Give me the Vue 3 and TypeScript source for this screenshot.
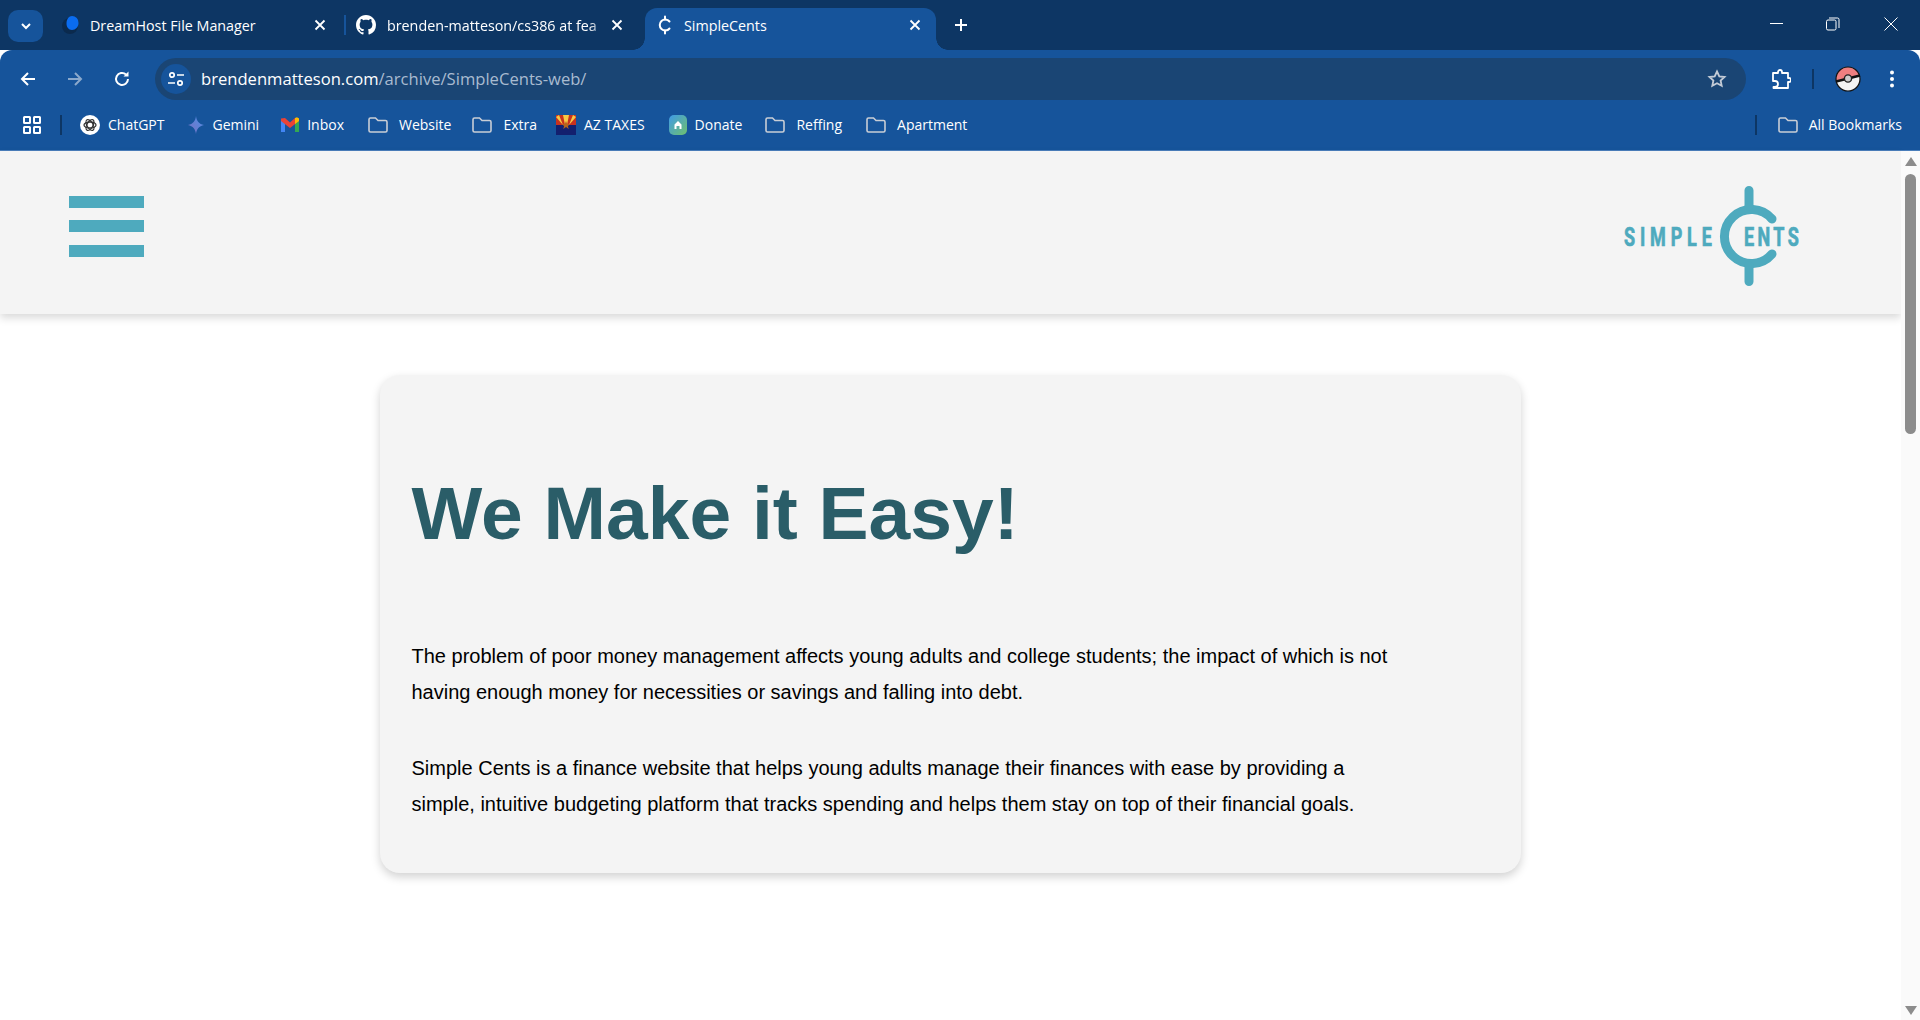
<script setup lang="ts">
interface Mark {
  label: string
  icon: string
  after: number
}

const marks: Mark[] = [
  { label: 'ChatGPT', icon: 'gpt', after: 22 },
  { label: 'Gemini', icon: 'gemini', after: 22 },
  { label: 'Inbox', icon: 'gmail', after: 24 },
  { label: 'Website', icon: 'folder', after: 21 },
  { label: 'Extra', icon: 'folder', after: 19 },
  { label: 'AZ TAXES', icon: 'flag', after: 24 },
  { label: 'Donate', icon: 'donate', after: 23 },
  { label: 'Reffing', icon: 'folder', after: 24 },
  { label: 'Apartment', icon: 'folder', after: 0 },
]
</script>

<template>
  <div class="window">
    <div class="tabstrip">
      <button class="tab-search">
        <svg width="14" height="14" viewBox="0 0 14 14"><path d="M3 5l4 4 4-4" fill="none" stroke="#fff" stroke-width="2" /></svg>
      </button>
      <div class="tab tab-one">
        <svg class="fav" width="18" height="20" viewBox="0 0 18 20">
          <circle cx="8" cy="11" r="8" fill="#0b2a4d" />
          <path d="M10 1a6.500 6.500 0 0 1 6.500 7c0 4-3 7-6.500 7-3.500 0-5.500-3-5.500-6.500C4.500 4 7 1 10 1z" fill="#0a6cf0" />
        </svg>
        <span class="tab-title">DreamHost File Manager</span>
        <svg class="close" width="12" height="12" viewBox="0 0 12 12"><path d="M1.500 1.500l9 9M10.500 1.500l-9 9" stroke="#fff" stroke-width="1.800" /></svg>
      </div>
      <i class="tab-sep"></i>
      <div class="tab tab-two">
        <svg class="fav" width="20" height="20" viewBox="0 0 16 16">
          <path fill="#fff" d="M8 0C3.580 0 0 3.580 0 8c0 3.540 2.290 6.530 5.470 7.590.4.070.55-.17.55-.38 0-.19-.01-.82-.01-1.490-2.010.37-2.530-.49-2.690-.94-.09-.23-.48-.94-.82-1.130-.28-.15-.68-.52-.01-.53.630-.01 1.080.58 1.230.82.720 1.210 1.870.87 2.330.66.070-.52.280-.87.510-1.070-1.780-.2-3.640-.89-3.640-3.950 0-.87.310-1.590.820-2.150-.08-.2-.36-1.020.08-2.120 0 0 .67-.21 2.200.82.640-.18 1.320-.27 2-.27s1.360.09 2 .27c1.530-1.040 2.200-.82 2.200-.82.440 1.100.16 1.920.08 2.120.51.560.82 1.270.82 2.150 0 3.070-1.870 3.750-3.650 3.950.29.250.54.730.54 1.480 0 1.070-.01 1.930-.01 2.200 0 .21.150.46.550.38A8.010 8.010 0 0 0 16 8c0-4.420-3.580-8-8-8z" />
        </svg>
        <span class="tab-title fade">brenden-matteson/cs386 at fea</span>
        <svg class="close" width="12" height="12" viewBox="0 0 12 12"><path d="M1.500 1.500l9 9M10.500 1.500l-9 9" stroke="#fff" stroke-width="1.800" /></svg>
      </div>
      <div class="tab tab-active">
        <svg class="fav" width="18" height="20" viewBox="0 0 18 20" fill="none" stroke="#fff" stroke-width="2" stroke-linecap="round">
          <path d="M13.500 6.500A5.500 5.500 0 1 0 13.500 13.500" />
          <path d="M9 1.500v3M9 15.500v3" />
        </svg>
        <span class="tab-title">SimpleCents</span>
        <svg class="close" width="12" height="12" viewBox="0 0 12 12"><path d="M1.500 1.500l9 9M10.500 1.500l-9 9" stroke="#fff" stroke-width="1.800" /></svg>
      </div>
      <svg class="new-tab" width="14" height="14" viewBox="0 0 14 14"><path d="M7 1v12M1 7h12" stroke="#fff" stroke-width="2" /></svg>
      <div class="win-btns">
        <svg width="14" height="14" viewBox="0 0 14 14"><path d="M0 6.500h13" stroke="#fff" stroke-width="1" /></svg>
        <svg width="14" height="14" viewBox="0 0 14 14" fill="none" stroke="#fff"><rect x=".5" y="3" width="9.500" height="10" rx="1.500" /><path d="M3 1h8.500A1.500 1.500 0 0 1 13 2.500V11" /></svg>
        <svg width="14" height="14" viewBox="0 0 14 14"><path d="M.5.500l13 13M13.500.500l-13 13" stroke="#fff" stroke-width="1" /></svg>
      </div>
    </div>

    <div class="toolbar">
      <svg class="nav" width="18" height="18" viewBox="0 0 18 18" fill="none" stroke="#fff" stroke-width="2"><path d="M16 9H3M9 3L3 9l6 6" /></svg>
      <svg class="nav dim" width="18" height="18" viewBox="0 0 18 18" fill="none" stroke="#8ba9cc" stroke-width="2"><path d="M2 9h13M9 3l6 6-6 6" /></svg>
      <svg class="nav" width="18" height="18" viewBox="0 0 18 18" fill="none" stroke="#fff" stroke-width="2"><path d="M15 9a6 6 0 1 1-2-4.500" /><path d="M15.500 1.500v5h-5" fill="#fff" stroke="none" /></svg>
      <div class="omnibox">
        <span class="site-info">
          <svg width="18" height="18" viewBox="0 0 18 18" fill="none" stroke="#fff" stroke-width="1.700"><circle cx="5" cy="5" r="2.200" /><path d="M10 5h7M1 13h7" /><circle cx="13" cy="13" r="2.200" /></svg>
        </span>
        <span class="url">brendenmatteson.com<span class="url-dim">/archive/SimpleCents-web/</span></span>
        <svg class="star" width="20" height="20" viewBox="0 0 20 20" fill="none" stroke="#c3cbd6" stroke-width="1.800"><path d="M10 2.500l2.300 5 5.200.5-3.900 3.500 1.100 5.300L10 14.200l-4.700 2.600 1.100-5.300L2.500 8l5.200-.5z" /></svg>
      </div>
      <svg class="puzzle" width="20" height="20" viewBox="0 0 20 20" fill="none" stroke="#fff" stroke-width="1.800" stroke-linejoin="round"><path d="M2 4h5V3a2 2 0 0 1 4 0v1h6v5h1a2 2 0 0 1 0 4h-1v6H2.500v-1h1.500a3 3 0 0 0 0-6H2z" /></svg>
      <i class="bar-sep"></i>
      <svg class="ball" width="26" height="26" viewBox="0 0 26 26">
        <circle cx="13" cy="13" r="12" fill="#f3f3f3" />
        <path d="M1.200 15A12 12 0 0 1 24.500 9.500z" fill="#ef7f80" />
        <path d="M1 15.500L25 9.500" stroke="#111" stroke-width="2.600" />
        <circle cx="13" cy="13" r="12" fill="none" stroke="#111" stroke-width="1.200" />
        <circle cx="13" cy="12.500" r="3.600" fill="#ccc" stroke="#222" stroke-width="1.400" />
      </svg>
      <svg class="dots" width="6" height="20" viewBox="0 0 6 20" fill="#fff"><circle cx="3" cy="3.500" r="2" /><circle cx="3" cy="10" r="2" /><circle cx="3" cy="16.500" r="2" /></svg>
    </div>

    <div class="bookmarks">
      <svg class="apps" width="18" height="18" viewBox="0 0 18 18" fill="none" stroke="#fff" stroke-width="2"><rect x="1" y="1" width="6" height="6" rx=".5" /><rect x="11" y="1" width="6" height="6" rx=".5" /><rect x="1" y="11" width="6" height="6" rx=".5" /><rect x="11" y="11" width="6" height="6" rx=".5" /></svg>
      <i class="mark-sep"></i>
      <div
        v-for="m in marks"
        :key="m.label"
        class="mark"
        :class="'mark-' + m.icon"
        :style="{ marginRight: m.after + 'px' }"
      >
        <svg v-if="m.icon === 'gpt'" width="20" height="20" viewBox="0 0 20 20">
          <circle cx="10" cy="10" r="10" fill="#fff" />
          <g fill="none" stroke="#333" stroke-width="1.300">
            <ellipse cx="10" cy="10" rx="6" ry="3" />
            <ellipse cx="10" cy="10" rx="6" ry="3" transform="rotate(60 10 10)" />
            <ellipse cx="10" cy="10" rx="6" ry="3" transform="rotate(120 10 10)" />
          </g>
        </svg>
        <svg v-else-if="m.icon === 'gemini'" width="18" height="20" viewBox="0 0 18 20">
          <defs>
            <linearGradient id="gem" x1="0" y1="1" x2="1" y2="0"><stop offset="0" stop-color="#7a6fc0" /><stop offset="1" stop-color="#4c90e8" /></linearGradient>
          </defs>
          <path d="M9 1c.6 5 3 8 8 9-5 1-7.400 4-8 9-.6-5-3-8-8-9 5-1 7.400-4 8-9z" fill="url(#gem)" />
        </svg>
        <svg v-else-if="m.icon === 'gmail'" width="18" height="16" viewBox="0 0 18 16">
          <path d="M0 3v12h4V6z" fill="#4285f4" />
          <path d="M14 6v9h4V3z" fill="#34a853" />
          <path d="M0 1.500L4 1l5 4.500L14 1l4 .5V4l-9 7-9-7z" fill="#ea4335" />
          <path d="M14 1l2-.8 2 1.300V4l-4 3z" fill="#fbbc04" />
        </svg>
        <svg v-else-if="m.icon === 'folder'" width="20" height="16" viewBox="0 0 20 16" fill="none" stroke="#c9ced6" stroke-width="1.600">
          <path d="M1 2.500A1.500 1.500 0 0 1 2.500 1h5L10 3.500h7.500A1.500 1.500 0 0 1 19 5v8.500a1.500 1.500 0 0 1-1.500 1.500h-15A1.500 1.500 0 0 1 1 13.500z" />
        </svg>
        <svg v-else-if="m.icon === 'flag'" width="20" height="20" viewBox="0 0 20 20">
          <rect width="20" height="20" fill="#13206e" />
          <path d="M0 0h20v10H0z" fill="#c8321e" />
          <path d="M0 2L7 10 3 0zM20 2L13 10 17 0zM7 0l2 10h2l2-10z" fill="#f6c945" />
          <path d="M10 6l1.200 3 3 .3-2.300 1.700.8 3L10 12l-2.700 2 .8-3-2.300-1.700 3-.3z" fill="#b5651d" />
        </svg>
        <svg v-else width="18" height="20" viewBox="0 0 18 20">
          <defs>
            <linearGradient id="don" x1="0" y1="0" x2="1" y2="1"><stop offset="0" stop-color="#3f9be8" /><stop offset="1" stop-color="#6fc06d" /></linearGradient>
          </defs>
          <rect width="18" height="20" rx="5" fill="url(#don)" />
          <path d="M9 6l3.500 3.500V14h-2v-3h-3v3h-2V9.500z" fill="#fff" />
        </svg>
        <span>{{ m.label }}</span>
      </div>
      <i class="mark-sep all-sep"></i>
      <div class="mark mark-folder all-marks">
        <svg width="20" height="16" viewBox="0 0 20 16" fill="none" stroke="#c9ced6" stroke-width="1.600">
          <path d="M1 2.500A1.500 1.500 0 0 1 2.500 1h5L10 3.500h7.500A1.500 1.500 0 0 1 19 5v8.500a1.500 1.500 0 0 1-1.500 1.500h-15A1.500 1.500 0 0 1 1 13.500z" />
        </svg>
        <span>All Bookmarks</span>
      </div>
    </div>

    <div class="viewport">
      <div class="page">
        <header class="site-header">
          <div class="burger"><i></i><i></i><i></i></div>
          <svg class="logo" width="180" height="104" viewBox="0 0 180 104">
            <g fill="none" stroke="#4eaabe" stroke-width="9" stroke-linecap="round">
              <path d="M150 35A27 27 0 1 0 150 70" />
              <path d="M127 6.500V22M127 82V97.500" />
            </g>
            <text class="logo-text" transform="translate(2 62) scale(.72 1)" textLength="122" lengthAdjust="spacing">SIMPLE</text>
            <text class="logo-text" transform="translate(122 62) scale(.72 1)" textLength="76" lengthAdjust="spacing">ENTS</text>
          </svg>
        </header>
        <section class="card">
          <h1>We Make it Easy!</h1>
          <p>The problem of poor money management affects young adults and college students; the impact of which is not having enough money for necessities or savings and falling into debt.</p>
          <p>Simple Cents is a finance website that helps young adults manage their finances with ease by providing a simple, intuitive budgeting platform that tracks spending and helps them stay on top of their financial goals.</p>
        </section>
      </div>
      <div class="scrollbar">
        <i class="arrow-up"></i>
        <i class="thumb"></i>
        <i class="arrow-down"></i>
      </div>
    </div>
  </div>
</template>

<style>
html,
body {
  margin: 0;
  overflow: hidden;
}
</style>

<style scoped>
.window {
  width: 1920px;
  height: 1020px;
  display: flex;
  flex-direction: column;
  overflow: hidden;
  background: #fff;
  font-family: 'Open Sans', 'Liberation Sans', sans-serif;
  color: #fff;
}

.tabstrip {
  height: 50px;
  display: flex;
  align-items: flex-end;
  background: #0d3664;
  flex: none;
}

.tab-search {
  width: 35px;
  height: 32px;
  margin: 0 0 8px 8px;
  border: 0;
  padding: 0;
  border-radius: 10px;
  background: #16549b;
  display: flex;
  align-items: center;
  justify-content: center;
  flex: none;
}

.tab {
  height: 42px;
  padding-bottom: 8px;
  display: flex;
  align-items: center;
  font-size: 14.3px;
  flex: none;
  box-sizing: border-box;
}

.tab-one {
  width: 301px;
  padding-left: 19px;
  padding-right: 18px;
}

.tab-two {
  width: 299px;
  padding-left: 10px;
  padding-right: 22px;
}

.tab-active {
  position: relative;
  width: 291px;
  padding-left: 11px;
  padding-right: 15px;
  background: #16549b;
  border-radius: 12px 12px 0 0;
}

/* the concave feet either side of the active tab */
.tab-active::before,
.tab-active::after {
  content: '';
  position: absolute;
  bottom: 0;
  width: 12px;
  height: 12px;
}

.tab-active::before {
  left: -12px;
  background: radial-gradient(circle at 0 0, transparent 11.5px, #16549b 12px);
}

.tab-active::after {
  right: -12px;
  background: radial-gradient(circle at 100% 0, transparent 11.5px, #16549b 12px);
}

.tab-sep {
  width: 2px;
  height: 20px;
  margin-bottom: 15px;
  background: #16549b;
}

.fav {
  flex: none;
  margin-right: 10px;
}

.tab-two .fav {
  margin-right: 11px;
}

.tab-title {
  flex: 1;
  white-space: nowrap;
}

.fade {
  -webkit-mask-image: linear-gradient(90deg, #000 90%, transparent);
  mask-image: linear-gradient(90deg, #000 90%, transparent);
}

.close {
  flex: none;
}

.new-tab {
  margin: 0 0 18px 18px;
}

.win-btns {
  margin-left: auto;
  display: flex;
  gap: 42px;
  padding-right: 22px;
  height: 48px;
  align-items: center;
  align-self: flex-start;
}

.win-btns svg:last-child {
  margin-left: 2px;
}

.toolbar {
  height: 50px;
  flex: none;
  display: flex;
  align-items: flex-start;
  box-sizing: border-box;
  padding-top: 8px;
  background: #16549b;
  border-radius: 12px 12px 0 0;
}

.nav {
  margin-top: 12px;
  margin-left: 19px;
  margin-right: 10px;
  flex: none;
}

.omnibox {
  width: 1591px;
  height: 42px;
  margin-left: 14px;
  display: flex;
  align-items: center;
  border-radius: 21px;
  background: #1a4574;
  flex: none;
}

.site-info {
  width: 30px;
  height: 30px;
  margin-left: 6px;
  border-radius: 50%;
  background: #16549b;
  display: flex;
  align-items: center;
  justify-content: center;
}

.url {
  margin-left: 10px;
  font-size: 16.6px;
  line-height: 42px;
}

.url-dim {
  color: #a9bbd0;
}

.star {
  margin-left: auto;
  margin-right: 19px;
}

.puzzle {
  margin: 11px 0 0 25px;
  flex: none;
}

.bar-sep {
  width: 2px;
  height: 20px;
  margin: 11px 0 0 21px;
  background: #0d3664;
  flex: none;
}

.ball {
  margin: 8px 0 0 21px;
  flex: none;
}

.dots {
  margin: 11px 0 0 28px;
  flex: none;
}

.bookmarks {
  height: 51px;
  flex: none;
  box-sizing: border-box;
  display: flex;
  align-items: center;
  padding-left: 23px;
  background: #16549b;
  border-bottom: 1px solid #4a7ebb;
  font-size: 14px;
}

.apps {
  flex: none;
}

.mark-sep {
  width: 2px;
  height: 20px;
  margin-left: 19px;
  margin-right: 18px;
  background: #0d3664;
}

.all-sep {
  margin-left: auto;
  margin-right: 21px;
}

.mark {
  display: flex;
  align-items: center;
  gap: 8px;
  white-space: nowrap;
}

.mark span {
  margin-top: -2px;
}

.mark-folder {
  gap: 11px;
}

.all-marks {
  margin-right: 18px;
}

.viewport {
  flex: 1;
  min-height: 0;
  display: flex;
}

.page {
  flex: 1;
  min-width: 0;
  font-family: 'Liberation Sans', Arial, sans-serif;
  color: #000;
}

.site-header {
  height: 163px;
  display: flex;
  align-items: flex-start;
  justify-content: space-between;
  padding: 0 99px 0 69px;
  background: #f4f4f4;
  box-shadow: 0 4px 8px rgba(0, 0, 0, 0.15);
}

.burger {
  display: flex;
  flex-direction: column;
  gap: 12px;
  padding-top: 45px;
}

.burger i {
  display: block;
  width: 75px;
  height: 12px;
  background: #4eaabe;
}

.burger i:last-child {
  margin-top: 1px;
}

.logo {
  flex: none;
  margin-top: 33px;
}

.logo-text {
  font-family: Roboto, 'Liberation Sans', sans-serif;
  font-size: 25px;
  font-weight: 700;
  fill: #4eaabe;
  stroke: #4eaabe;
  stroke-width: 0.7px;
}

.card {
  width: 1141px;
  box-sizing: border-box;
  margin: 61px auto 0;
  padding: 30px 31.5px;
  background: #f4f4f4;
  border-radius: 20px;
  box-shadow: 0 4px 10px rgba(0, 0, 0, 0.18);
}

h1 {
  margin: 64px 0 81px;
  font-size: 75px;
  line-height: 88px;
  font-weight: 700;
  color: #2a5d68;
}

p {
  max-width: 985px;
  margin: 0 0 40px;
  font-size: 20px;
  line-height: 36px;
}

p:last-child {
  margin-bottom: 21px;
}

.scrollbar {
  width: 19px;
  flex: none;
  display: flex;
  flex-direction: column;
  align-items: center;
  background: #fafafa;
}

.arrow-up {
  margin-top: 6px;
  border: 6px solid transparent;
  border-top: 0;
  border-bottom: 9px solid #8c8c8c;
}

.thumb {
  width: 11px;
  height: 260px;
  margin-top: 8px;
  border-radius: 6px;
  background: #8c8c8c;
}

.arrow-down {
  margin-top: auto;
  margin-bottom: 5px;
  border: 6px solid transparent;
  border-bottom: 0;
  border-top: 9px solid #8c8c8c;
}
</style>
